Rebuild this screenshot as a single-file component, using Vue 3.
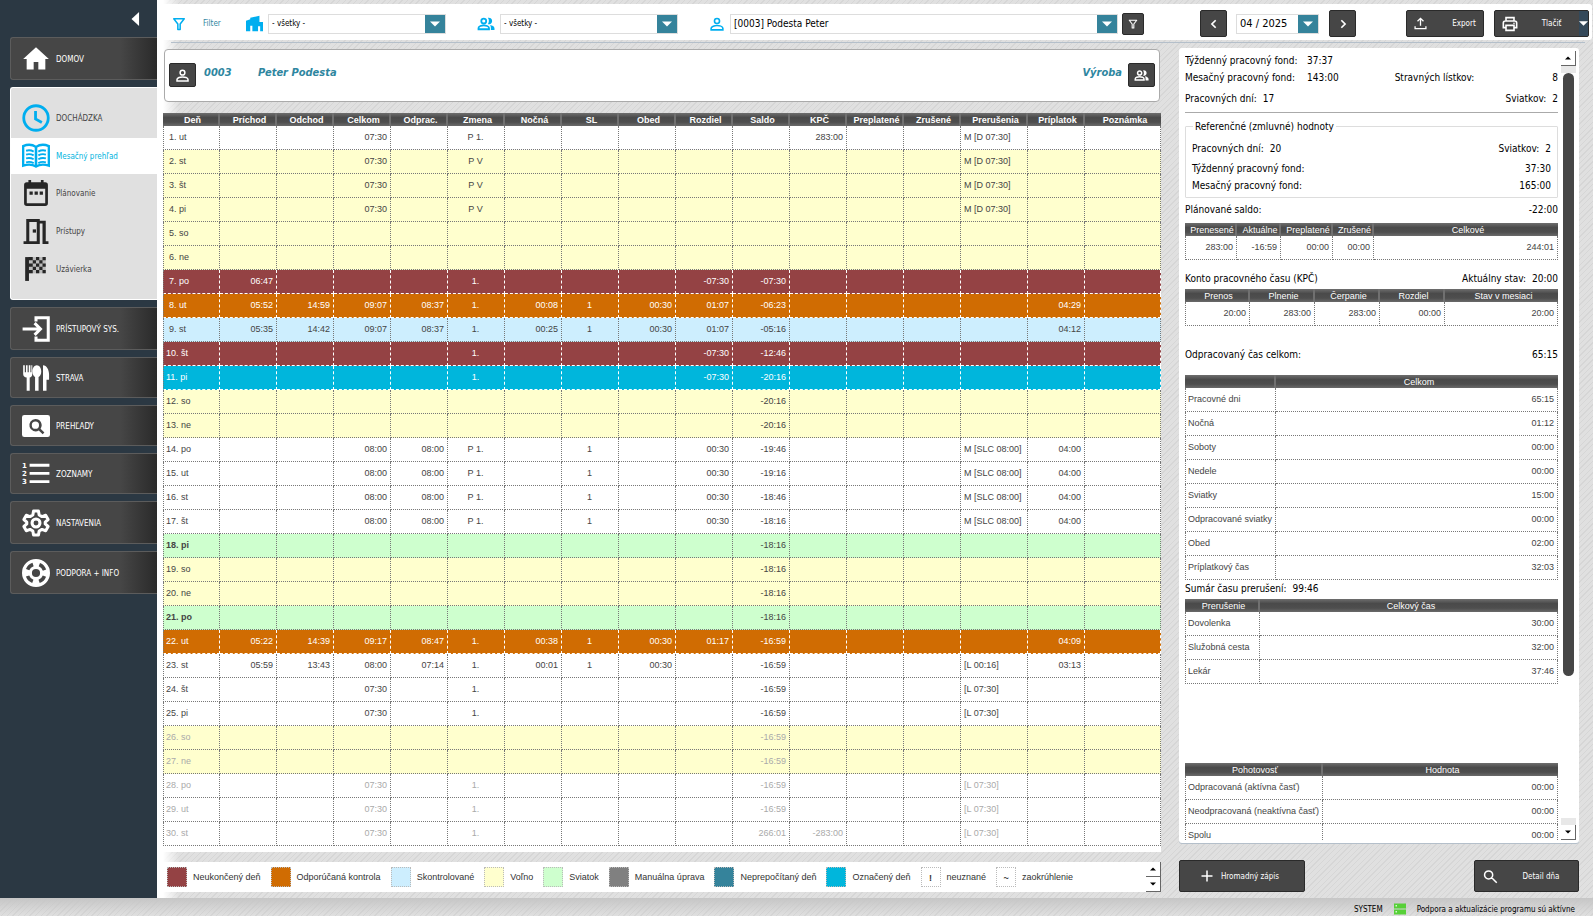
<script setup>
import { ref, h } from 'vue'

const person = '<g fill="none" stroke="currentColor" stroke-width="2.4"><circle cx="12" cy="7.5" r="3.8"/><path d="M3.2 20.8v-2.3c0-3 5.5-4.3 8.8-4.3s8.8 1.3 8.8 4.3v2.3z"/></g>'
const people = '<g fill="none" stroke="currentColor" stroke-width="2.4"><circle cx="9" cy="8" r="3.3"/><path d="M2 19v-1.6c0-2.4 4.4-3.6 7-3.6s7 1.2 7 3.600V19z"/></g><path fill="currentColor" d="M14.500 3.800a4.400 4.400 0 1 1 0 8.400c1.800-2.400 1.800-6 0-8.400zM17.500 13.200c2.700.5 5.800 1.800 5.800 4.400v2.500h-4.800v-2.700c0-1.600-.3-2.900-1-4.200z"/>'
const icons = {
  home: '<path fill="currentColor" d="M10 21v-6.500h4V21h6v-9h3L12 2 1 12h3v9z"/>',
  clock: '<g fill="none" stroke="currentColor" stroke-width="2.4"><circle cx="12" cy="12" r="10.500"/><path d="M11.600 6v6.800l5.400 3"/></g>',
  book: '<g fill="none" stroke="currentColor" stroke-width="2"><path d="M1 3.500C4.500 2 9 2.200 12 4.200c3-2 7.500-2.200 11-.7v16.800c-3.500-1.200-8-1.200-11 .8-3-2-7.500-2-11-.8z"/><path stroke-width="2.200" d="M12 4.200V21"/><path stroke-width="1.600" d="M3.500 7.500c2-.6 4.500-.4 6.500.7M3.500 10.800c2-.6 4.500-.4 6.500.7M3.500 14.100c2-.6 4.500-.4 6.500.7M3.500 17.400c2-.6 4.500-.4 6.500.7M20.500 7.500c-2-.6-4.500-.4-6.500.7M20.500 10.800c-2-.6-4.500-.4-6.500.7M20.500 14.100c-2-.6-4.500-.4-6.500.7M20.500 17.400c-2-.6-4.500-.4-6.500.7"/></g>',
  calendar: '<path fill="currentColor" fill-rule="evenodd" d="M5 0h2.500v2h9V0H19v2h1.500A2.500 2.500 0 0 1 23 4.500v17a2.500 2.500 0 0 1-2.500 2.500h-17A2.500 2.500 0 0 1 1 21.500v-17A2.500 2.500 0 0 1 3.500 2H5zM3.500 8v13.500h17V8z"/><path fill="currentColor" d="M6 10.500h3v3H6zM10.700 10.500h3v3h-3zM15.400 10.500h3v3h-3z"/>',
  door: '<path fill="currentColor" fill-rule="evenodd" d="M3 1h12.500v1.500H21v19h2.500V24H18V5h-2.500v19H.5v-2.500H3zm2.800 2.700v17.800h6.900V3.700z"/><rect x="9" y="10.500" width="3" height="3" fill="currentColor"/>',
  flag: '<path fill="currentColor" d="M2 1h3.500v22H2z"/><path fill="currentColor" d="M5 1h4v3H5zM12 1h3v3h-3zM18 1h3v3h-3zM9 4h3v3H9zM15 4h3v3h-3zM5 7h4v3H5zM12 7h3v3h-3zM18 7h3v3h-3zM9 10h3v3H9zM15 10h3v3h-3zM5 13h4v3H5zM12 13h3v3h-3zM18 13h3v3h-3z"/><path fill="currentColor" fill-opacity=".2" d="M5 1h16v15H5z"/>',
  enter: '<path fill="none" stroke="currentColor" stroke-width="2.600" d="M12 5.500V2.300h10.500v19.400H12v-3.200M.5 12h15M10.800 7l5 5-5 5"/>',
  food: '<path fill="currentColor" d="M1 1h1.400v6h1V1h1.400v6h1V1h1.400v6h.8V1h.8v7.500c0 1.800-1 2.800-2.200 3.100V23H4V11.600C2.300 11.300 1 10.300 1 8.500zM12.700 1c2.200 0 3.800 2.400 3.800 5.400 0 2.300-1 4.100-2.300 4.800V23h-3V11.200C9.900 10.500 9 8.700 9 6.400 9 3.400 10.500 1 12.700 1zM18 1c3.200 0 5.200 4 5.200 8v4.500H21V23h-3z"/>',
  preview: '<path fill="currentColor" fill-rule="evenodd" d="M2 2.500h20a2 2 0 0 1 2 2v15a2 2 0 0 1-2 2H2a2 2 0 0 1-2-2v-15a2 2 0 0 1 2-2zM11.500 6a5.300 5.300 0 1 0 2.900 9.800l3.300 3.300 1.500-1.500-3.300-3.300A5.300 5.300 0 0 0 11.500 6zm0 2.200a3.100 3.100 0 1 1 0 6.200 3.100 3.100 0 0 1 0-6.200z"/>',
  list: '<path stroke="currentColor" stroke-width="2.400" d="M6.500 4.500H23.500M6.500 11.500H23.500M6.500 18.500H23.500"/><g fill="currentColor" font-family="DejaVu Sans" font-weight="700" font-size="6"><text x="0" y="6.500">1</text><text x="0" y="13.700">2</text><text x="0" y="20.900">3</text></g>',
  gear: '<g fill="none" stroke="currentColor" stroke-width="2.600" stroke-linejoin="round"><path d="M9.900 1.800h4.200l.6 3.300 2.400 1.400 3.200-1.100 2.100 3.600-2.500 2.200v1.600l2.500 2.200-2.100 3.600-3.200-1.100-2.400 1.400-.6 3.300H9.900l-.6-3.300-2.400-1.400-3.200 1.100L1.600 15l2.500-2.200v-1.600L1.600 9l2.100-3.600 3.200 1.100 2.400-1.400z"/><circle cx="12" cy="12" r="3.400"/></g>',
  buoy: '<path fill="currentColor" fill-rule="evenodd" d="M12 0a12 12 0 1 0 0 24 12 12 0 0 0 0-24zm0 8.500a3.500 3.500 0 1 1 0 7 3.500 3.500 0 0 1 0-7z"/><circle cx="12" cy="12" r="7.700" fill="none" stroke="#464646" stroke-width="3" stroke-dasharray="6.600 5.495" stroke-dashoffset="-2.700"/>',
  caret: '<path fill="currentColor" d="M19 0v24L6 12z"/>',
  funnel: '<path fill="none" stroke="currentColor" stroke-width="2.600" stroke-linejoin="round" d="M3 3h18l-7 9v9.500h-4V12z"/>',
  building: '<path fill="currentColor" d="M0 8l6-2V4l13-3v9h5v13h-4v-7h-3v7H9v-8H6v8H0z"/>',
  person, people,
  upload: '<path fill="none" stroke="currentColor" stroke-width="2.400" d="M12 16V3M6.500 8L12 2.600 17.500 8M2 17v4.500h20V17"/>',
  printer: '<g fill="none" stroke="currentColor" stroke-width="2.400"><path d="M6 7.500V2.500h12v5M6 17.500H2v-7c0-2 1-3 3-3h14c2 0 3 1 3 3v7h-4"/><path d="M6 14h12v7.500H6z"/></g><circle cx="18" cy="11" r="1.200" fill="currentColor"/>',
  search: '<path fill="none" stroke="currentColor" stroke-width="2.400" d="M15.500 9.500a6.500 6.500 0 1 1-13 0 6.500 6.500 0 0 1 13 0zM14 14l8 8"/>',
  plus: '<path stroke="currentColor" stroke-width="3" d="M12 1v22M1 12h22"/>',
  prev: '<path fill="none" stroke="currentColor" stroke-width="4" d="M16 3l-9 9 9 9"/>',
  next: '<path fill="none" stroke="currentColor" stroke-width="4" d="M8 3l9 9-9 9"/>',
  down: '<path fill="currentColor" d="M0 6h24L12 18z"/>',
  up: '<path fill="currentColor" d="M0 18h24L12 6z"/>',
  server: '<path fill="#57d038" d="M0 1h24v10H0zM0 13h24v10H0z"/><path fill="#d8f5d0" d="M3 4h3v3H3zM3 16h3v3H3z"/>',
}
const Icon = (p) => h('svg', { viewBox: '0 0 24 24', 'aria-hidden': 'true', innerHTML: icons[p.name] })
Icon.props = ['name']

const submenu = [
  ['clock', 'DOCHÁDZKA', 'head'],
  ['book', 'Mesačný prehľad', 'active'],
  ['calendar', 'Plánovanie', ''],
  ['door', 'Prístupy', ''],
  ['flag', 'Uzávierka', ''],
]
const menu = [
  ['enter', 'PRÍSTUPOVÝ SYS.', 'tall'],
  ['food', 'STRAVA', ''],
  ['preview', 'PREHĽADY', ''],
  ['list', 'ZOZNAMY', ''],
  ['gear', 'NASTAVENIA', 'tall'],
  ['buoy', 'PODPORA + INFO', 'tall'],
]

const columns = ['Deň', 'Príchod', 'Odchod', 'Celkom', 'Odprac.', 'Zmena', 'Nočná', 'SL', 'Obed', 'Rozdiel', 'Saldo', 'KPČ', 'Preplatené', 'Zrušené', 'Prerušenia', 'Príplatok', 'Poznámka']
const source = `
|1. ut|||07:30||P 1.||||||283:00|||M [D 07:30]||
free|2. st|||07:30||P V|||||||||M [D 07:30]||
free|3. št|||07:30||P V|||||||||M [D 07:30]||
free|4. pi|||07:30||P V|||||||||M [D 07:30]||
free|5. so||||||||||||||||
free|6. ne||||||||||||||||
open|7. po|06:47||||1.||||-07:30|-07:30||||||
check|8. ut|05:52|14:59|09:07|08:37|1.|00:08|1|00:30|01:07|-06:23|||||04:29|
checked|9. st|05:35|14:42|09:07|08:37|1.|00:25|1|00:30|01:07|-05:16|||||04:12|
open|10. št|||||1.||||-07:30|-12:46||||||
marked|11. pi|||||1.||||-07:30|-20:16||||||
free|12. so||||||||||-20:16||||||
free|13. ne||||||||||-20:16||||||
|14. po|||08:00|08:00|P 1.||1||00:30|-19:46||||M [SLC 08:00]|04:00|
|15. ut|||08:00|08:00|P 1.||1||00:30|-19:16||||M [SLC 08:00]|04:00|
|16. st|||08:00|08:00|P 1.||1||00:30|-18:46||||M [SLC 08:00]|04:00|
|17. št|||08:00|08:00|P 1.||1||00:30|-18:16||||M [SLC 08:00]|04:00|
holiday|18. pi||||||||||-18:16||||||
free|19. so||||||||||-18:16||||||
free|20. ne||||||||||-18:16||||||
holiday|21. po||||||||||-18:16||||||
check|22. ut|05:22|14:39|09:17|08:47|1.|00:38|1|00:30|01:17|-16:59|||||04:09|
|23. st|05:59|13:43|08:00|07:14|1.|00:01|1|00:30||-16:59||||[L 00:16]|03:13|
|24. št|||07:30||1.|||||-16:59||||[L 07:30]||
|25. pi|||07:30||1.|||||-16:59||||[L 07:30]||
free future|26. so||||||||||-16:59||||||
free future|27. ne||||||||||-16:59||||||
future|28. po|||07:30||1.|||||-16:59||||[L 07:30]||
future|29. ut|||07:30||1.|||||-16:59||||[L 07:30]||
future|30. st|||07:30||1.|||||266:01|-283:00|||[L 07:30]||`
const days = source.trim().split('\n').map((line) => {
  const [state, ...cells] = line.split('|')
  return { state, cells: cells.slice(0, 17) }
})
const cellClass = (i, value) => ({
  txt: i === 0 || i === 14 || i === 16,
  mid: i === 5 || i === 7,
  short: i === 0 && value[1] === '.',
})

const legend = [
  ['open', '', 'Neukončený deň'],
  ['check', '', 'Odporúčaná kontrola'],
  ['checked', '', 'Skontrolované'],
  ['free', '', 'Voľno'],
  ['holiday', '', 'Sviatok'],
  ['manual', '', 'Manuálna úprava'],
  ['pending', '', 'Neprepočítaný deň'],
  ['marked', '', 'Označený deň'],
  ['', '!', 'neuznané'],
  ['', '~', 'zaokrúhlenie'],
]

const balance = { cls: 'balance', head: ['Prenesené', 'Aktuálne', 'Preplatené', 'Zrušené', 'Celkové'], rows: [['283:00', '-16:59', '00:00', '00:00', '244:01']] }
const account = { cls: 'account', head: ['Prenos', 'Plnenie', 'Čerpanie', 'Rozdiel', 'Stav v mesiaci'], rows: [['20:00', '283:00', '283:00', '00:00', '20:00']] }
const worked = {
  cls: 'worked named', head: ['', 'Celkom'],
  rows: [['Pracovné dni', '65:15'], ['Nočná', '01:12'], ['Soboty', '00:00'], ['Nedele', '00:00'], ['Sviatky', '15:00'], ['Odpracované sviatky', '00:00'], ['Obed', '02:00'], ['Príplatkový čas', '32:03']],
}
const breaks = { cls: 'breaks named', head: ['Prerušenie', 'Celkový čas'], rows: [['Dovolenka', '30:00'], ['Služobná cesta', '32:00'], ['Lekár', '37:46']] }
const standby = { cls: 'standby named', head: ['Pohotovosť', 'Hodnota'], rows: [['Odpracovaná (aktívna časť)', '00:00'], ['Neodpracovaná (neaktívna časť)', '00:00'], ['Spolu', '00:00']] }

const DataTable = ({ t }) => h('table', { class: ['grid', t.cls] }, [
  h('thead', h('tr', t.head.map((c) => h('th', { scope: 'col' }, c)))),
  h('tbody', t.rows.map((r) => h('tr', r.map((c) => h('td', c))))),
])
DataTable.props = ['t']

const site = ref('- všetky -')
const group = ref('- všetky -')
const employee = ref('[0003] Podesta Peter')
const month = ref('04 / 2025')
</script>

<template>
  <div class="app">
    <div class="body">
      <nav class="sidebar">
        <button class="collapse" aria-label="Zbaliť menu"><Icon name="caret" /></button>
        <a href="#" class="item tall"><Icon name="home" /><span>DOMOV</span></a>
        <div class="submenu">
          <a v-for="[icon, label, cls] in submenu" :key="label" href="#" :class="['sub', cls]"><Icon :name="icon" /><span>{{ label }}</span></a>
        </div>
        <a v-for="[icon, label, cls] in menu" :key="label" href="#" :class="['item', cls]"><Icon :name="icon" /><span>{{ label }}</span></a>
      </nav>

      <main class="main">
        <header class="toolbar">
          <Icon name="funnel" class="tool funnel" />
          <span class="filter">Filter</span>
          <label for="site"><Icon name="building" class="tool building" /></label>
          <div class="combo fixed">
            <select id="site" v-model="site" aria-label="Pracovisko"><option>- všetky -</option></select>
            <span class="arrow"><Icon name="down" /></span>
          </div>
          <label for="group" class="spaced"><Icon name="people" class="tool" /></label>
          <div class="combo fixed">
            <select id="group" v-model="group" aria-label="Skupina"><option>- všetky -</option></select>
            <span class="arrow"><Icon name="down" /></span>
          </div>
          <label for="employee" class="spaced"><Icon name="person" class="tool person" /></label>
          <div class="combo wide">
            <select id="employee" v-model="employee" aria-label="Zamestnanec"><option>[0003] Podesta Peter</option></select>
            <span class="arrow"><Icon name="down" /></span>
          </div>
          <button class="dark small" aria-label="Filtrovať"><Icon name="funnel" /></button>
          <div class="period">
            <button class="dark step" aria-label="Predchádzajúci mesiac"><Icon name="prev" /></button>
            <div class="combo month">
              <input v-model="month" aria-label="Mesiac" />
              <span class="arrow"><Icon name="down" /></span>
            </div>
            <button class="dark step" aria-label="Nasledujúci mesiac"><Icon name="next" /></button>
          </div>
          <button class="dark export"><Icon name="upload" /><span>Export</span></button>
          <button class="dark print"><Icon name="printer" /><span>Tlačiť</span><i class="drop"><Icon name="down" /></i></button>
        </header>
        <div class="rule"></div>

        <div class="content">
          <section class="records">
            <div class="employee">
              <button class="dark badge" aria-label="Zamestnanec"><Icon name="person" /></button>
              <span class="code">0003</span>
              <span class="name">Peter Podesta</span>
              <span class="dept">Výroba</span>
              <button class="dark badge" aria-label="Oddelenie"><Icon name="people" /></button>
            </div>

            <div class="sheet">
              <table class="grid days">
                <thead>
                  <tr><th v-for="c in columns" :key="c" scope="col">{{ c }}</th></tr>
                </thead>
                <tbody>
                  <tr v-for="(d, r) in days" :key="r" :class="d.state">
                    <td v-for="(c, i) in d.cells" :key="i" :class="cellClass(i, c)">{{ c }}</td>
                  </tr>
                </tbody>
              </table>
            </div>

            <div class="legend">
              <div v-for="[cls, mark, label] in legend" :key="label" class="key"><i :class="['swatch', cls]">{{ mark }}</i><span>{{ label }}</span></div>
              <div class="spin">
                <button aria-label="Hore"><Icon name="up" /></button>
                <button aria-label="Dole"><Icon name="down" /></button>
              </div>
            </div>
          </section>

          <aside class="side">
            <div class="summary">
              <div class="scroll">
                <dl class="facts top">
                  <div class="line"><dt class="lead">Týždenný pracovný fond:</dt><dd>37:37</dd></div>
                  <div class="line"><dt class="lead">Mesačný pracovný fond:</dt><dd>143:00</dd><dt class="meal">Stravných lístkov:</dt><dd class="end">8</dd></div>
                  <div class="line third"><dt>Pracovných dní:</dt><dd>17</dd><dt class="end">Sviatkov:</dt><dd>2</dd></div>
                </dl>
                <hr />
                <fieldset>
                  <legend>Referenčné (zmluvné) hodnoty</legend>
                  <dl class="facts">
                    <div class="line"><dt>Pracovných dní:</dt><dd>20</dd><dt class="end">Sviatkov:</dt><dd>2</dd></div>
                    <div class="line week"><dt>Týždenný pracovný fond:</dt><dd class="end">37:30</dd></div>
                    <div class="line"><dt>Mesačný pracovný fond:</dt><dd class="end">165:00</dd></div>
                  </dl>
                </fieldset>
                <dl class="facts planned"><div class="line"><dt>Plánované saldo:</dt><dd class="end">-22:00</dd></div></dl>
                <DataTable :t="balance" />
                <dl class="facts konto"><div class="line"><dt>Konto pracovného času (KPČ)</dt><dt class="end">Aktuálny stav:</dt><dd>20:00</dd></div></dl>
                <DataTable :t="account" />
                <dl class="facts total"><div class="line"><dt>Odpracovaný čas celkom:</dt><dd class="end">65:15</dd></div></dl>
                <DataTable :t="worked" />
                <dl class="facts sum"><div class="line"><dt>Sumár času prerušení:</dt><dd>99:46</dd></div></dl>
                <DataTable :t="breaks" />
                <DataTable :t="standby" />
              </div>
              <div class="bar">
                <button aria-label="Posunúť hore"><Icon name="up" /></button>
                <div class="track"><div class="thumb"></div></div>
                <button aria-label="Posunúť dole"><Icon name="down" /></button>
              </div>
            </div>
            <div class="actions">
              <button class="dark bulk"><Icon name="plus" /><span>Hromadný zápis</span></button>
              <button class="dark detail"><Icon name="search" /><span>Detail dňa</span></button>
            </div>
          </aside>
        </div>
      </main>
    </div>
    <footer class="status">
      <span>SYSTEM</span><Icon name="server" /><span>Podpora a aktualizácie programu sú aktívne</span>
    </footer>
  </div>
</template>

<style>
body { margin: 0; }
svg { display: block; flex: none; overflow: visible; }
table.grid { width: 100%; border-collapse: separate; border-spacing: 0; table-layout: fixed; font: 9px "Liberation Sans", Arial, sans-serif; color: #444; }
.grid th { box-sizing: border-box; height: 13px; padding: 1px 0 0 4px; font-size: 9px; line-height: 12px; font-weight: 400; color: #fff; text-align: center; white-space: nowrap; background: linear-gradient(#6e6e6e, #4a4a4a 35%, #4e4e4e 70%, #6a6a6a); border-right: 2px solid #707070; }
.grid th:last-child { border-right: 0; }
.grid td { box-sizing: border-box; height: 24px; padding: 0 3px 0 2px; line-height: 13px; text-align: right; white-space: nowrap; border-right: 1px dotted #777; border-bottom: 1px dotted #777; }
.grid td:first-child { border-left: 1px dotted #777; }
.named td:first-child { text-align: left; }
.balance th:nth-child(1), .balance th:nth-child(3) { width: 52px; }
.balance th:nth-child(2) { width: 44px; }
.balance th:nth-child(4) { width: 41px; }
.account th { width: 65px; }
.account th:last-child { width: auto; }
.worked th:first-child { width: 91px; }
.breaks th:first-child { width: 75px; }
.standby th:first-child { width: 138px; }
table.standby { margin-top: 79px; }
</style>

<style scoped>
.app { display: flex; flex-direction: column; height: 100vh; overflow: hidden; font: 10px "DejaVu Sans Condensed", "DejaVu Sans", Tahoma, sans-serif; color: #000; background: repeating-linear-gradient(135deg, #d6d6d6 0 1px, #e0e0e0 1px 4px); }
button { padding: 0; font: inherit; cursor: pointer; }
.body { flex: 1; display: flex; min-height: 0; }

.sidebar { flex: none; box-sizing: border-box; width: 157px; padding: 12px 0 0 10px; display: flex; flex-direction: column; gap: 7px; background: #2b3843; font-size: 8px; }
.collapse { align-self: flex-end; width: 14px; height: 14px; margin: 0 15px 4px 0; border: 0; background: none; color: #fff; }
.collapse svg { width: 14px; height: 14px; }
.sidebar a { display: flex; align-items: center; gap: 6px; text-decoration: none; }
.sidebar a svg { width: 28px; height: 28px; }
.sidebar a span { padding-top: 1px; }
.item { box-sizing: border-box; height: 41px; padding-left: 11px; color: #fff; border: 1px solid #5c5c5c; border-right: 0; border-radius: 3px 0 0 3px; background: linear-gradient(90deg, #464646 75%, #2a2a2a); }
.item.tall { height: 43px; }
.submenu { box-sizing: border-box; height: 213px; border-left: 1px solid #fff; border-radius: 3px 0 0 3px; background: #e0e0e0; border-bottom: 1px solid #fff; border-top: 1px solid #fff; }
.sub { height: 38px; padding-left: 11px; color: #444; }
.sub svg { color: #262626; }
.sidebar .sub svg { width: 26px; height: 26px; margin: 0 1px; }
.sub.head { height: 40px; padding-top: 10px; }
.sidebar .sub.head svg, .sidebar .sub.active svg { width: 28px; height: 28px; margin: 0; color: #00aeef; }
.sub.active { height: 36px; background: #fff; color: #00b4e0; }

.main { flex: 1; min-width: 0; display: flex; flex-direction: column; padding-left: 6px; background: linear-gradient(90deg, #fff 6px, rgba(255, 255, 255, 0) 22px); }
.toolbar { flex: none; display: flex; align-items: center; box-sizing: border-box; height: 36px; margin: 4px 1px 0 0; padding: 3px 3px 0 9px; background: #fff; border-radius: 0 3px 3px 0; }
.tool { width: 18px; height: 18px; color: #00aeef; }
.tool.funnel { width: 14px; height: 14px; }
.tool.building { width: 17px; height: 17px; margin-left: 1px; }
.tool.person { width: 16px; height: 16px; }
.filter { width: 42px; margin-left: 17px; font-size: 8px; color: #2e86a0; }
.spaced { margin-left: 31px; }
.combo { position: relative; box-sizing: border-box; display: flex; height: 20px; margin-left: 5px; border: 1px solid #ddd; background: #fff; }
.combo select, .combo input { flex: 1; min-width: 0; width: 100%; padding: 0 20px 0 3px; border: 0; border-radius: 0; appearance: none; background: none; font: inherit; color: #000; }
.combo.fixed { width: 178px; font-size: 8px; }
.combo.wide { flex: 1; font-size: 10px; }
.arrow { position: absolute; right: 0; top: 0; bottom: 0; width: 20px; display: flex; align-items: center; justify-content: center; background: #35839b; color: #fff; pointer-events: none; }
.arrow svg { width: 10px; height: 10px; }
.dark { box-sizing: border-box; display: flex; align-items: center; justify-content: center; border: 1px solid #2a2a2a; border-radius: 2px; background: #464646; color: #fff; }
.small { width: 22px; height: 22px; margin-left: 4px; }
.small svg { width: 10px; height: 10px; }
.period { display: flex; align-items: center; margin: 0 50px 0 56px; }
.step { width: 27px; height: 27px; }
.step svg { width: 10px; height: 10px; }
.month { width: 83px; margin: 0 10px 0 9px; font-size: 11px; }
.combo.month input { padding-right: 30px; }
.export { width: 78px; height: 27px; gap: 25px; font-size: 8px; }
.export svg { width: 13px; height: 13px; }
.print { position: relative; width: 95px; height: 27px; margin-left: 10px; padding: 0 20px 0 0; gap: 24px; font-size: 8px; }
.print svg { width: 16px; height: 16px; }
.drop { position: absolute; right: 0; top: 0; bottom: 0; width: 9px; display: flex; align-items: center; background: #34495a; }
.drop svg { width: 9px; height: 9px; }
.rule { height: 1px; margin: 2px 8px 0; background: #b4bfca; }

.content { flex: 1; display: flex; min-height: 0; padding: 5px 14px 6px 0; gap: 18px; }
.records { flex: 1; min-width: 0; display: flex; flex-direction: column; padding-top: 1px; }
.employee { flex: none; box-sizing: border-box; display: flex; align-items: flex-start; height: 53px; margin: 0 1px; padding: 13px 4px 0; border: 1px solid #aaa; border-radius: 4px; background: #fff; font-size: 11px; font-weight: 700; font-style: italic; line-height: 20px; color: #2e86a0; }
.badge { width: 27px; height: 24px; }
.badge svg { width: 15px; height: 15px; }
.code { width: 46px; margin-left: 8px; }
.name { margin-left: 8px; }
.dept { margin: 0 6px 0 auto; }
.sheet { flex: 1; min-height: 0; margin-top: 11px; overflow: hidden; background: #fff; }
.days th { width: 57px; font-weight: 700; }
.days th:nth-child(15) { width: 67px; }
.days th:last-child { width: auto; }
.days td.txt { text-align: left; padding-left: 3px; }
.days td.txt:first-child { padding-left: 2px; }
.days td.short:first-child { padding-left: 5px; }
.days td.mid { text-align: center; }
.open { background: #944244; }
.check { background: #d06c02; }
.checked { background: #cdeefe; }
.marked { background: #00b6dc; }
.free { background: #ffffce; }
.holiday { background: #ceffce; }
.manual { background: #808080; }
.pending { background: #35839b; }
.days .open td, .days .check td, .days .marked td { color: #fff; border-right: 1px dashed #fff; border-bottom: 1px dashed #fff; }
.days .holiday td:first-child { font-weight: 700; }
.days .future td { color: #aaa; }
.legend { flex: none; display: flex; align-items: center; height: 30px; margin-top: 10px; padding-left: 4px; gap: 10px; background: #fff; font: 9px "Liberation Sans", Arial, sans-serif; color: #333; }
.key { display: flex; align-items: center; gap: 6px; white-space: nowrap; }
.swatch { box-sizing: border-box; width: 20px; height: 20px; border: 1px dotted #bbb; font-style: normal; font-weight: 700; text-align: center; line-height: 20px; }
.spin { margin-left: auto; align-self: stretch; width: 15px; display: flex; flex-direction: column; }
.spin button, .bar button { box-sizing: border-box; height: 15px; width: 15px; display: flex; align-items: center; justify-content: center; background: #fff; border: 0; border-right: 1px solid #666; border-bottom: 1px solid #666; color: #000; }
.spin svg, .bar svg { width: 6px; height: 6px; }

.side { flex: none; width: 400px; display: flex; flex-direction: column; }
.summary { flex: 1; min-height: 0; display: flex; box-sizing: border-box; padding: 3px 3px 3px 6px; border-radius: 3px; background: #fff; box-shadow: 0 1px 0 #b4bfca; }
.scroll { flex: 1; min-width: 0; overflow: hidden; }
.facts { margin: 0; line-height: 17px; }
.facts dd { margin: 0; }
.line { display: flex; gap: 6px; white-space: nowrap; }
.top .lead { width: 116px; }
.top { padding-top: 1px; }
.meal { margin-left: 50px; }
.line .end { margin-left: auto; }
.third { margin-top: 4px; }
hr { height: 1px; margin: 5px 0 0; border: 0; background: #aaa; }
fieldset { margin: 5px 0 0; padding: 5px 6px 3px; border: 1px solid #ddd; border-radius: 1px; }
legend { margin-left: 1px; padding: 0 2px; line-height: 17px; }
.week { margin-top: 3px; }
.planned { padding: 3px 0 5px; }
.konto { padding: 10px 0 2px; }
.total { padding: 20px 0 12px; }
.sum { padding: 0 0 2px; }
.bar { flex: none; width: 15px; margin-left: 3px; display: flex; flex-direction: column; }
.track { flex: 1; padding: 7px 2px; background: linear-gradient(#e8e8e8 0 7px, #fff 7px calc(100% - 7px), #e8e8e8 calc(100% - 7px)); }
.thumb { height: 81%; border-radius: 6px; background: #464646; }
.actions { flex: none; display: flex; justify-content: space-between; margin-top: 17px; }
.actions .dark { height: 32px; font-size: 8px; }
.bulk { width: 126px; padding-right: 4px; gap: 8px; }
.bulk svg { width: 12px; height: 12px; }
.detail { width: 105px; padding-right: 10px; gap: 24px; }
.detail svg { width: 15px; height: 15px; }
.status { flex: none; height: 18px; box-sizing: border-box; display: flex; align-items: center; justify-content: flex-end; gap: 11px; padding: 4px 18px 0 0; font-size: 8px; background: linear-gradient(#c6c6c6, rgba(225, 225, 225, 0)); }
.status svg { width: 12px; height: 12px; }
</style>
